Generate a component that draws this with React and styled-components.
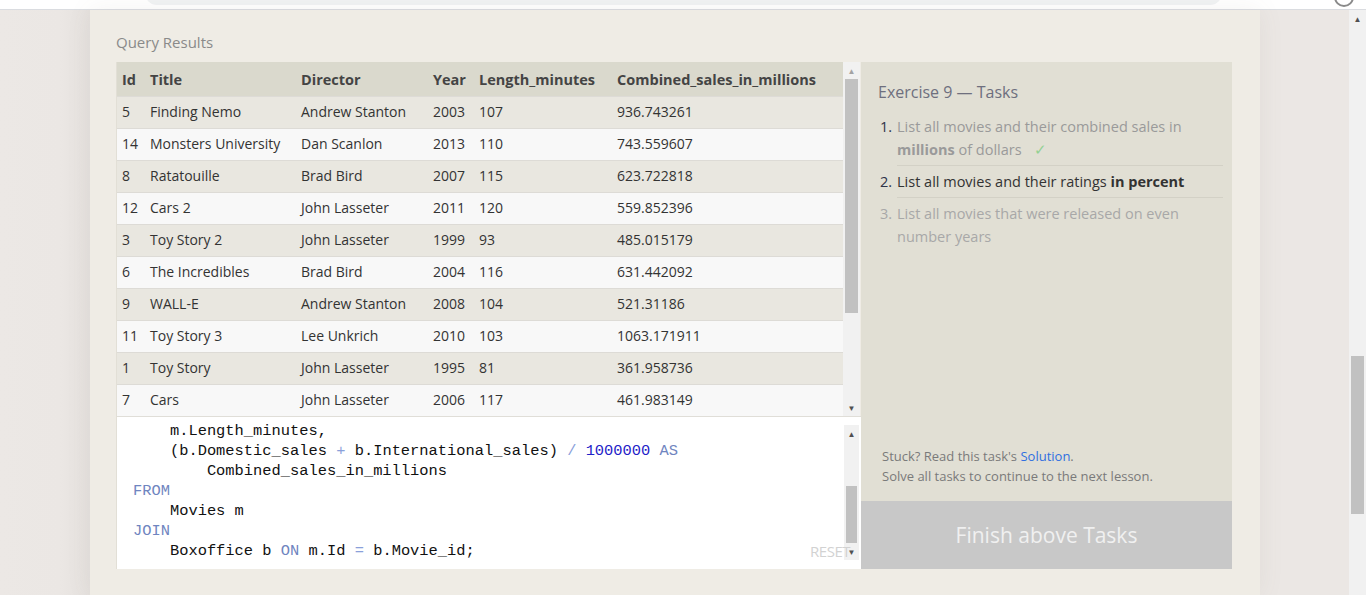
import React from 'react';
import styled, {createGlobalStyle} from 'styled-components';

const GlobalStyle = createGlobalStyle`
    html, body {
        margin: 0;
        padding: 0;
        background: #ebe7e4;
        overflow: hidden;
    }
    body {
        font-family: "Open Sans", "Noto Sans", sans-serif;
        color: #333333;
    }
`;

const Screen = styled.div`
    display: flex;
    flex-direction: column;
    width: 1366px;
    height: 595px;
    overflow: hidden;
`;

const TopBar = styled.div`
    display: flex;
    align-items: flex-start;
    height: 9px;
    background: #ffffff;
    border-bottom: 1px solid #dadce0;
    overflow: hidden;
    flex-shrink: 0;
`;

const AddressPill = styled.div`
    width: 1077px;
    height: 24px;
    margin-top: -19px;
    margin-left: 145px;
    background: #f1f3f4;
    border-radius: 12px;
`;

const Avatar = styled.div`
    width: 16px;
    height: 16px;
    margin-top: -13px;
    margin-left: 112px;
    border: 2px solid #8a8a8a;
    border-radius: 50%;
`;

const Viewport = styled.div`
    display: flex;
    flex: 1;
    min-height: 0;
`;

const Page = styled.div`
    flex: 1;
    padding-left: 90px;
    background: linear-gradient(90deg, #ece8e5 0px, #ebe7e4 60px, #e5e1de 90px, #ebe7e4 90px);
`;

const Card = styled.div`
    width: 1170px;
    height: 100%;
    box-sizing: border-box;
    padding: 22px 28px 0 26px;
    background: #efece5;
    box-shadow: 0 0 24px rgba(120, 100, 90, 0.08);
`;

const SectionLabel = styled.div`
    font-size: 15px;
    line-height: 20px;
    color: #8a8a8a;
    margin-bottom: 10px;
`;

const Workspace = styled.div`
    display: flex;
    height: 507px;
`;

const LeftColumn = styled.div`
    display: flex;
    flex-direction: column;
    width: 744px;
    border-left: 1px solid #e2dfd6;
    border-bottom: 1px solid #e2dfd6;
`;

const ResultsPane = styled.div`
    display: flex;
    height: 354px;
    border-bottom: 1px solid #e0ded8;
`;

const TableViewport = styled.div`
    width: 726px;
    overflow: hidden;
`;

const Table = styled.table`
    width: 726px;
    border-collapse: collapse;
    table-layout: fixed;
    font-size: 14px;
`;

const HeadCell = styled.th`
    width: ${props => props.w}px;
    height: 34px;
    padding: 2px 0 0 5px;
    text-align: left;
    font-size: 14.5px;
    font-weight: 700;
    color: #444444;
    background: #dad9cd;
    box-sizing: border-box;
    white-space: nowrap;
`;

const Row = styled.tr`
    background: ${props => props.odd ? '#e9e7e0' : '#f8f8f8'};
    border-top: 1px solid #dddbd6;
`;

const Cell = styled.td`
    height: 30px;
    padding: 0 0 1px 5px;
    color: #333333;
    white-space: nowrap;
`;

const ScrollbarBox = styled.div`
    display: flex;
    flex-direction: column;
    width: ${props => props.w || 17}px;
    margin: ${props => props.m || '0'};
    background: #f1f1f1;
    flex-shrink: 0;
`;

const ArrowButton = styled.div`
    display: flex;
    align-items: center;
    justify-content: center;
    height: 17px;
    flex-shrink: 0;
    color: ${props => props.light ? '#a3a3a3' : '#505050'};
    font-size: 8px;
`;

const Track = styled.div`
    flex: 1;
    padding: 0 2px;
`;

const Thumb = styled.div`
    margin-top: ${props => props.top}px;
    height: ${props => props.h}px;
    background: #c1c1c1;
`;

const Scrollbar = ({w, m, top, h, lightUp, noDown}) => (
    <ScrollbarBox w={w} m={m}>
        <ArrowButton light={lightUp}>▲</ArrowButton>
        <Track><Thumb top={top} h={h}/></Track>
        {!noDown && <ArrowButton>▼</ArrowButton>}
    </ScrollbarBox>
);

const EditorPane = styled.div`
    display: flex;
    flex: 1;
    background: #ffffff;
    position: relative;
`;

const Code = styled.pre`
    flex: 1;
    margin: 0;
    padding: 4px 0 0 16px;
    font-family: "Liberation Mono", "DejaVu Sans Mono", monospace;
    font-size: 15.4px;
    line-height: 20px;
    color: #111111;
    overflow: hidden;
`;

const Keyword = styled.span`
    color: #6f85c0;
`;

const Operator = styled.span`
    color: #8aa0da;
`;

const NumberToken = styled.span`
    color: #1e22c8;
`;

const ResetLabel = styled.span`
    position: absolute;
    right: 11px;
    bottom: 8px;
    font-size: 15px;
    color: #d2d2d2;
    letter-spacing: -0.5px;
`;

const TasksPanel = styled.div`
    display: flex;
    flex-direction: column;
    width: 371px;
    background: #e1dfd4;
`;

const TasksBody = styled.div`
    flex: 1;
    padding: 19px 9px 0 17px;
`;

const TasksTitle = styled.div`
    font-size: 16px;
    line-height: 22px;
    color: #6e6f7e;
    margin-bottom: 12px;
`;

const TaskList = styled.ol`
    margin: 0;
    padding: 0;
    list-style: none;
`;

const TaskRow = styled.li`
    display: flex;
    margin-left: 19px;
    padding-bottom: 4px;
    margin-bottom: 4px;
    font-size: 14.5px;
    line-height: 23px;
    border-bottom: ${props => props.last ? 'none' : '1px solid #d3d1c6'};
    color: ${props => props.done ? '#9a9a9a' : props.muted ? '#a8a8a8' : '#333333'};
`;

const TaskNumber = styled.span`
    width: 17px;
    flex-shrink: 0;
    margin-left: -17px;
    color: ${props => props.muted ? '#a8a8a8' : '#2e3348'};
`;

const TaskText = styled.span`
    flex: 1;

    b {
        font-weight: 700;
    }
`;

const Check = styled.span`
    color: #93d193;
    margin-left: 12px;
`;

const Hint = styled.div`
    padding: 0 0 15px 21px;
    font-size: 13px;
    line-height: 20px;
    color: #7a7a7a;
`;

const SolutionLink = styled.a`
    color: #2f6fe0;
    text-decoration: none;
`;

const FinishButton = styled.div`
    display: flex;
    align-items: center;
    justify-content: center;
    height: 68px;
    background: #c8c8c8;
    color: #f0f0f0;
    font-size: 21px;
`;

const PageScroll = styled.div`
    display: flex;
`;

const columns = [
    ['Id', 28], ['Title', 151], ['Director', 132], ['Year', 46], ['Length_minutes', 138], ['Combined_sales_in_millions', 231]
];

const movies = [
    [5, 'Finding Nemo', 'Andrew Stanton', 2003, 107, '936.743261'],
    [14, 'Monsters University', 'Dan Scanlon', 2013, 110, '743.559607'],
    [8, 'Ratatouille', 'Brad Bird', 2007, 115, '623.722818'],
    [12, 'Cars 2', 'John Lasseter', 2011, 120, '559.852396'],
    [3, 'Toy Story 2', 'John Lasseter', 1999, 93, '485.015179'],
    [6, 'The Incredibles', 'Brad Bird', 2004, 116, '631.442092'],
    [9, 'WALL-E', 'Andrew Stanton', 2008, 104, '521.31186'],
    [11, 'Toy Story 3', 'Lee Unkrich', 2010, 103, '1063.171911'],
    [1, 'Toy Story', 'John Lasseter', 1995, 81, '361.958736'],
    [7, 'Cars', 'John Lasseter', 2006, 117, '461.983149']
];

const tasks = [
    {n: '1.', done: true, body: <>List all movies and their combined sales in <b>millions</b> of dollars<Check>✓</Check></>},
    {n: '2.', body: <>List all movies and their ratings <b>in percent</b></>},
    {n: '3.', muted: true, body: <>List all movies that were released on even number years</>}
];

const App = () => (
    <Screen>
        <GlobalStyle/>
        <TopBar>
            <AddressPill/>
            <Avatar/>
        </TopBar>
        <Viewport>
            <Page>
                <Card>
                    <SectionLabel>Query Results</SectionLabel>
                    <Workspace>
                        <LeftColumn>
                            <ResultsPane>
                                <TableViewport>
                                    <Table>
                                        <thead>
                                        <tr>
                                            {columns.map(([name, w]) => <HeadCell key={name} w={w}>{name}</HeadCell>)}
                                        </tr>
                                        </thead>
                                        <tbody>
                                        {movies.map((m, i) => (
                                            <Row key={m[0]} odd={i % 2 === 0}>
                                                {m.map((v, j) => <Cell key={j}>{v}</Cell>)}
                                            </Row>
                                        ))}
                                        </tbody>
                                    </Table>
                                </TableViewport>
                                <Scrollbar w={17} top={0} h={234} lightUp/>
                            </ResultsPane>
                            <EditorPane>
                                <Code>
{`    m.Length_minutes,
    (b.Domestic_sales `}<Operator>+</Operator>{` b.International_sales) `}<Operator>/</Operator>{` `}<NumberToken>1000000</NumberToken>{` `}<Keyword>AS</Keyword>{`
        Combined_sales_in_millions
`}<Keyword>FROM</Keyword>{`
    Movies m
`}<Keyword>JOIN</Keyword>{`
    Boxoffice b `}<Keyword>ON</Keyword>{` m.Id `}<Operator>=</Operator>{` b.Movie_id;`}
                                </Code>
                                <Scrollbar w={15} m="8px 2px 9px 0" top={44} h={57}/>
                                <ResetLabel>RESET</ResetLabel>
                            </EditorPane>
                        </LeftColumn>
                        <TasksPanel>
                            <TasksBody>
                                <TasksTitle>Exercise 9 — Tasks</TasksTitle>
                                <TaskList>
                                    {tasks.map((t, i) => (
                                        <TaskRow key={t.n} done={t.done} muted={t.muted} last={i === tasks.length - 1}>
                                            <TaskNumber muted={t.muted}>{t.n}</TaskNumber>
                                            <TaskText>{t.body}</TaskText>
                                        </TaskRow>
                                    ))}
                                </TaskList>
                            </TasksBody>
                            <Hint>
                                Stuck? Read this task's <SolutionLink href="#">Solution</SolutionLink>.<br/>
                                Solve all tasks to continue to the next lesson.
                            </Hint>
                            <FinishButton>Finish above Tasks</FinishButton>
                        </TasksPanel>
                    </Workspace>
                </Card>
            </Page>
            <PageScroll>
                <Scrollbar w={17} top={329} h={158} noDown/>
            </PageScroll>
        </Viewport>
    </Screen>
);

export default App;
